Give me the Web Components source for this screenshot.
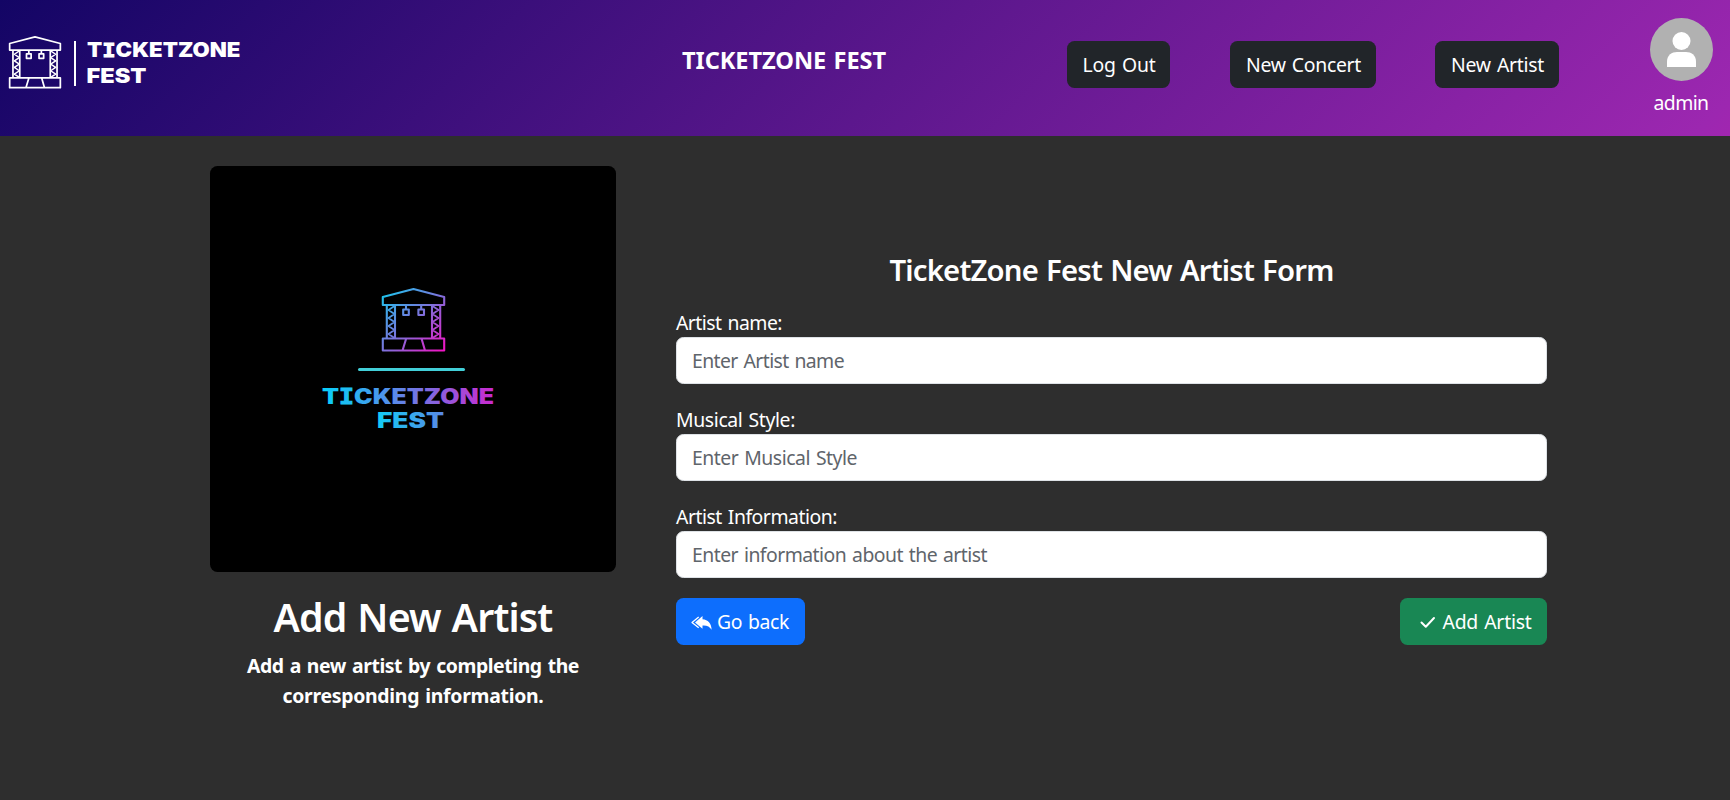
<!DOCTYPE html>
<html lang="en">
<head>
<meta charset="utf-8">
<title>TicketZone Fest</title>
<style>
html,body{margin:0;height:100%}
body{background:#2e2e2e;color:#fff;font:19.4px/30px "Noto Sans","Open Sans",sans-serif;word-spacing:.07em;overflow:hidden}
</style>
</head>
<body>
<tz-app></tz-app>
<script>
const define=(name,html,setup)=>customElements.define(name,class extends HTMLElement{
  connectedCallback(){
    if(this.shadowRoot)return;
    const t=document.createElement('template');t.innerHTML=html;
    this.attachShadow({mode:'open'}).append(t.content.cloneNode(true));
    if(setup)setup(this,this.shadowRoot);
  }
});

/* One line of text tracked to a given width. */
define('tz-text',`<style>:host{display:inline-block;white-space:nowrap}span{display:inline-block}</style><span><slot></slot></span>`,(el,root)=>{
  const w=+el.getAttribute('w'),s=root.querySelector('span');
  const n=el.textContent.length;
  s.style.letterSpacing=((w-s.getBoundingClientRect().width)/n)+'px';
});

define('tz-stage',`<style>:host{display:block}svg{display:block;width:100%;height:100%;overflow:visible}</style>
<svg viewBox="0 0 63 64" fill="none" stroke-width="2.1" stroke-linejoin="round">
<defs><linearGradient id="g" gradientUnits="userSpaceOnUse" x1="4" y1="4" x2="60" y2="62"><stop offset="0" stop-color="#1fc4ee"/><stop offset=".5" stop-color="#7d72dc"/><stop offset="1" stop-color="#ee16c4"/></linearGradient></defs>
<g id="s">
<path d="M.8 9 31.500 1 62.200 9V17H.8ZM.8 50.500H62.200V62.500H.8ZM4.800 17V50.500M13 17V50.500M50 17V50.500M58.200 17V50.500M24.200 50.500 20.500 62.500M39.500 50.500 43 62.500"/>
<path d="M24 17V21.500M21.200 21.500H26.800V27H21.200ZM39.200 17V21.500M36.400 21.500H42V27H36.400Z"/>
<path stroke-width="1.800" d="M12.500 18 6.500 22 12.500 26 6.500 30 12.500 34 6.500 38 12.500 42 6.500 46 12.500 50M50.500 18 56.500 22 50.500 26 56.500 30 50.500 34 56.500 38 50.500 42 56.500 46 50.500 50"/>
</g></svg>`,(el,root)=>{
  const s=root.querySelector('#s');
  s.setAttribute('stroke',el.hasAttribute('colored')?'url(#g)':'#fff');
});

define('tz-brand',`<style>
:host{display:flex;align-items:flex-start;word-spacing:0}
tz-stage{width:52px;height:53px}
i{width:1.500px;height:45px;background:#fff;margin:5px 11px 0 13px}
svg{margin-top:1px;display:block}
text{font:900 20px Inter,sans-serif;fill:#fff}.i{font-family:"DejaVu Sans Mono";font-weight:700;stroke:#fff;stroke-width:.9px}
</style><tz-stage></tz-stage><i></i>
<svg width="156" height="50"><text x="0" y="20" textLength="153.500" lengthAdjust="spacingAndGlyphs">T<tspan class="i">I</tspan>CKETZONE</text><text x="-.5" y="46" textLength="60" lengthAdjust="spacingAndGlyphs">FEST</text></svg>`);

define('tz-button',`<style>
:host{display:block}
button{all:unset;box-sizing:border-box;width:100%;height:47px;border-radius:7.500px;background:var(--bg,#212529);color:#fff;display:flex;align-items:center;justify-content:center;padding:1px 0 0 1px;word-spacing:.07em}
</style><button><slot></slot></button>`);

define('tz-avatar',`<style>
:host{display:flex;flex-direction:column;align-items:center;gap:7px}svg{display:block}tz-text{margin-left:-1px}
</style><svg width="63" height="63"><circle cx="31.500" cy="31.500" r="31.500" fill="#b1b1b1"/><circle cx="31.500" cy="23" r="9" fill="#fff"/><path fill="#fff" d="M17 49V43.500C17 37 22 34 27 34H36C41 34 46 37 46 43.500V49Z"/></svg>
<tz-text w="55">admin</tz-text>`);

define('tz-header',`<style>
:host{display:grid;grid-template-columns:682px 385px 103px 60px 146px 59px 124px 91px 63px;height:136px;background:linear-gradient(135deg,#130565,#9c27b0 98%,#a126b0)}
tz-brand{padding:36px 0 0 9px}
.t{font-weight:700;font-size:23.600px;line-height:34px;margin-top:43px}
tz-button{margin-top:41px}.b{grid-column:5}.c{grid-column:7}
tz-avatar{grid-column:9;margin-top:18px}
</style><tz-brand></tz-brand><tz-text class="t" w="204">TICKETZONE FEST</tz-text>
<tz-button><tz-text w="73">Log Out</tz-text></tz-button><tz-button class="b"><tz-text w="115">New Concert</tz-text></tz-button><tz-button class="c"><tz-text w="93">New Artist</tz-text></tz-button>
<tz-avatar></tz-avatar>`);

define('tz-poster',`<style>
:host{display:flex;flex-direction:column;align-items:center;width:406px;height:406px;border-radius:7.500px;background:#000}
tz-stage{width:63px;height:64px;margin-top:122px}
hr{border:0;width:107px;height:2.500px;border-radius:2px;background:#42cfd8;margin:16px 0 0 -3px}
svg{display:block;margin:14px 0 0 -11px}text{font:900 21px Inter,sans-serif;word-spacing:0}.i{font-family:"DejaVu Sans Mono";font-weight:700;stroke:#18c4f4;stroke-width:.9px}
</style><tz-stage colored></tz-stage><hr>
<svg width="174" height="46"><defs><linearGradient id="t" gradientUnits="userSpaceOnUse" x1="0" y1="0" x2="174" y2="0"><stop stop-color="#05d2fa"/><stop offset=".5" stop-color="#697de6"/><stop offset="1" stop-color="#cc28d0"/></linearGradient><linearGradient id="u" gradientUnits="userSpaceOnUse" x1="56" y1="0" x2="124" y2="0"><stop stop-color="#12cdf5"/><stop offset="1" stop-color="#5b86e5"/></linearGradient></defs>
<text x="1" y="18.500" textLength="172" lengthAdjust="spacingAndGlyphs" fill="url(#t)">T<tspan class="i">I</tspan>CKETZONE</text><text x="56" y="42.500" textLength="67" lengthAdjust="spacingAndGlyphs" fill="url(#u)">FEST</text></svg>`);

define('tz-intro',`<style>
:host{display:flex;flex-direction:column;align-items:center;width:406px}
h1{margin:21px 0 10px;font:600 39.300px/48px "Noto Sans",sans-serif;height:48px}
p{margin:0;font-weight:700;display:flex;flex-direction:column;align-items:center}
</style><tz-poster></tz-poster><h1><tz-text w="279">Add New Artist</tz-text></h1><p><tz-text w="332">Add a new artist by completing the</tz-text><tz-text w="261">corresponding information.</tz-text></p>`);

define('tz-field',`<style>
:host{display:block;height:97px}label{display:block;box-sizing:border-box;height:30px;padding-top:1px}
.in{box-sizing:border-box;height:47px;border:1px solid #dee2e6;border-radius:7.500px;background:#fff;color:#5f656b;padding:7.500px 15px 0}
</style><label><slot></slot></label><div class="in"><slot name="hint"></slot></div>`);

define('tz-form',`<style>
:host{display:block;width:871px;padding-top:85px}
h2{margin:0;height:56px;text-align:center;font:600 29.300px/38px "Noto Sans",sans-serif}
.row{display:flex;justify-content:space-between}
.g{width:129px;--bg:#0d6efd}.a{width:147px;--bg:#198754}
svg{display:block;flex:none}
</style><h2><tz-text w="444">TicketZone Fest New Artist Form</tz-text></h2>
<tz-field><tz-text w="106">Artist name:</tz-text><tz-text slot="hint" w="152">Enter Artist name</tz-text></tz-field>
<tz-field><tz-text w="119">Musical Style:</tz-text><tz-text slot="hint" w="165">Enter Musical Style</tz-text></tz-field>
<tz-field><tz-text w="161">Artist Information:</tz-text><tz-text slot="hint" w="295">Enter information about the artist</tz-text></tz-field>
<div class="row"><tz-button class="g"><svg width="21" height="14" viewBox="0 0 21 14" style="margin:1px 5px 0 -2px"><path fill="#fff" d="M11.500 0V3.200C17 3.600 20.500 7.200 20.600 13.800 18.700 10.600 16 9.200 11.500 9.500V12.700L4 6.400Z"/><path fill="none" stroke="#fff" stroke-width="1.300" stroke-linejoin="round" d="M7.700 1 1 6.400 7.700 11.800"/></svg><tz-text w="72">Go back</tz-text></tz-button>
<tz-button class="a"><svg width="16" height="13" viewBox="0 0 16 13" style="margin:0 7px 0 3px"><path fill="none" stroke="#fff" stroke-width="2" stroke-linecap="round" stroke-linejoin="round" d="M1.500 6.500 5.800 10.800 14 2"/></svg><tz-text w="89">Add Artist</tz-text></tz-button></div>`);

define('tz-app',`<style>
:host{display:block}main{display:flex;gap:60px;padding:30px 0 0 210px}
</style><tz-header></tz-header><main><tz-intro></tz-intro><tz-form></tz-form></main>`);
</script>
</body>
</html>
